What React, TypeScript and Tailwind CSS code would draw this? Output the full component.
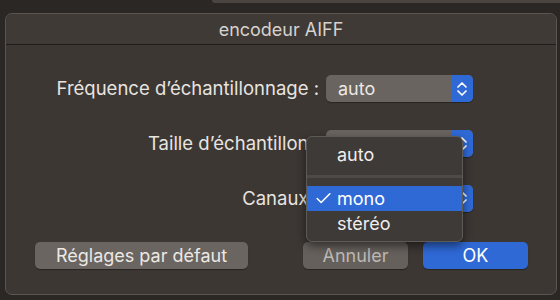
import { Check } from 'lucide-react'

const rows = [
  { label: 'Fréquence d’échantillonnage :', value: 'auto' },
  { label: 'Taille d’échantillon :', value: '' },
  { label: 'Canaux :', value: '' },
]

function Stepper() {
  return (
    <div className="w-[22px] h-full bg-[#2f69d6] rounded-r-[5px] flex items-center justify-center">
      <svg width="12" height="18" viewBox="0 0 12 18" fill="none" stroke="white" strokeWidth="1.7" strokeLinecap="round" strokeLinejoin="round">
        <path d="M2 7 L6 3 L10 7" />
        <path d="M2 11 L6 15 L10 11" />
      </svg>
    </div>
  )
}

function Popup({ value }: { value: string }) {
  return (
    <div className="w-[147px] h-[27px] flex rounded-[5px] bg-[#69645f] shadow-[0_1px_1px_rgba(0,0,0,0.35)]">
      <div className="flex-1 pl-3 flex items-center text-[18px] text-[#ece8e4]">{value}</div>
      <Stepper />
    </div>
  )
}

export default function App() {
  return (
    <div
      className="w-[560px] h-[300px] bg-[#2a2724] relative overflow-hidden"
      style={{ fontFamily: 'Inter, "Liberation Sans", sans-serif' }}
    >
      {/* strip of the window behind */}
      <div className="absolute left-[212px] top-0 w-[348px] h-[3px] bg-[#4a4541] rounded-bl-[3px]" />

      <div className="absolute left-[5px] top-[13px] w-[552px] h-[282px] rounded-[7px] bg-[#3c3733] border border-[#5a5551] overflow-hidden flex flex-col">
        {/* Title */}
        <div className="h-[31px] shrink-0 flex items-center justify-center bg-[#3f3a36] border-b border-[#1e1b19] text-[18px] text-[#d6d2ce]">
          encodeur AIFF
        </div>

        {/* Form */}
        <div className="mt-[30px] grid grid-cols-[313px_147px] gap-x-[7px] gap-y-[27px] items-center">
          {rows.map((r, i) => (
            <div key={i} className="contents">
              <div className="text-right text-[18.5px] text-[#e8e4e0] whitespace-nowrap">{r.label}</div>
              <Popup value={r.value} />
            </div>
          ))}
        </div>

        {/* Buttons */}
        <div className="mt-[30px] flex pl-[29px] pr-[28px]">
          <button className="w-[213px] h-[27px] rounded-[5px] bg-[#6a6560] text-[18px] text-[#ece8e4] shadow-[0_1px_1px_rgba(0,0,0,0.35)]">
            Réglages par défaut
          </button>
          <div className="flex-1" />
          <button className="w-[105px] h-[27px] rounded-[5px] bg-[#65605b] text-[18px] text-[#bdb9b5] shadow-[0_1px_1px_rgba(0,0,0,0.35)]">
            Annuler
          </button>
          <button className="ml-[15px] w-[105px] h-[27px] rounded-[5px] bg-[#2f69d6] text-[18px] text-white shadow-[0_1px_1px_rgba(0,0,0,0.35)]">
            OK
          </button>
        </div>
      </div>

      {/* Open menu */}
      <div className="absolute left-[306px] top-[136px] w-[157px] h-[106px] rounded-[6px] bg-[#3d3a38] border border-[#5e5a57] shadow-[0_4px_10px_rgba(0,0,0,0.5)] overflow-hidden flex flex-col pt-[5px] text-[18px] text-[#f0eeec]">
        <div className="h-[25px] flex items-center pl-[30px]">auto</div>
        <div className="h-[19px] flex items-center">
          <div className="w-full h-[3px] bg-[#4e4a47]" />
        </div>
        <div className="h-[25px] flex items-center bg-[#2f69d6] text-white">
          <Check className="ml-[7px] w-[19px] h-[19px]" strokeWidth={2} />
          <span className="ml-[4px]">mono</span>
        </div>
        <div className="h-[25px] flex items-center pl-[30px]">stéréo</div>
      </div>
    </div>
  )
}
